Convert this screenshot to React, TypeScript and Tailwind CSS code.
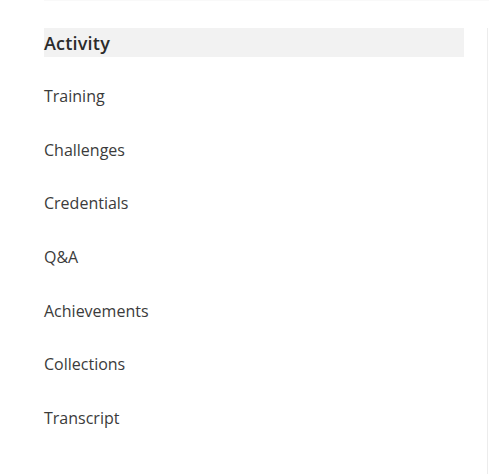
export default function App() {
  const items = ["Training", "Challenges", "Credentials", "Q&A", "Achievements", "Collections", "Transcript"];
  return (
    <div className="relative w-[489px] h-[474px] bg-white overflow-hidden" style={{ fontFamily: '"Open Sans", "Noto Sans", sans-serif' }}>
      <div className="absolute left-[44px] right-0 top-0 h-px bg-[#f9f9f9]" />
      <div className="absolute left-[487px] top-[28px] bottom-0 w-px bg-[#ececec]" />
      <div className="pl-[44px] pt-[28px] w-[464px] flex flex-col gap-[24.67px]">
        <div className="h-[29px] bg-[#f2f2f2] flex items-center pt-[2px] text-[18px] font-semibold text-[#2b2b2b] tracking-[0.2px]">Activity</div>
        {items.map((t) => (
          <div key={t} className="h-[29px] flex items-center text-[16px] text-[#3b3b3b]">{t}</div>
        ))}
      </div>
    </div>
  );
}
